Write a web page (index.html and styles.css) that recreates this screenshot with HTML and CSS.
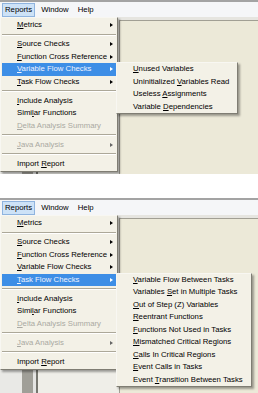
FILE: index.html
```html
<!DOCTYPE html>
<html lang="en">
<head>
  <meta charset="UTF-8" />
  <title>Reports menu</title>
  <link rel="stylesheet" href="styles.css">
</head>
<body>

  <!-- first shot: Variable Flow Checks open -->
  <div class="shot">
    <div class="topline"></div>
    <div class="menubar">
      <span class="open">Reports</span>
      <span>Window</span>
      <span>Help</span>
    </div>
    <div class="band"></div>
    <div class="workspace">
      <div class="left-pane">
        <div class="lp-a"></div><div class="lp-b"></div><div class="lp-c"></div><div class="lp-d"></div>
      </div>
      <div class="panel"></div>
    </div>

    <div class="menu main-menu">
      <div class="item sub"><span><u>M</u>etrics</span><i class="arrow"></i></div>
      <div class="sep"></div>
      <div class="item sub"><span><u>S</u>ource Checks</span><i class="arrow"></i></div>
      <div class="item sub"><span><u>F</u>unction Cross Reference</span><i class="arrow"></i></div>
      <div class="item sub hot"><span><u>V</u>ariable Flow Checks</span><i class="arrow"></i></div>
      <div class="item sub"><span><u>T</u>ask Flow Checks</span><i class="arrow"></i></div>
      <div class="sep"></div>
      <div class="item"><span><u>I</u>nclude Analysis</span></div>
      <div class="item"><span>Simi<u>l</u>ar Functions</span></div>
      <div class="item off"><span><u>D</u>elta Analysis Summary</span></div>
      <div class="sep"></div>
      <div class="item sub off"><span><u>J</u>ava Analysis</span><i class="arrow"></i></div>
      <div class="sep"></div>
      <div class="item"><span>Import <u>R</u>eport</span></div>
    </div>

    <div class="menu sub-menu sub-vars">
      <div class="item"><span><u>U</u>nused Variables</span></div>
      <div class="item"><span>Uninitialized <u>V</u>ariables Read</span></div>
      <div class="item"><span>Useless <u>A</u>ssignments</span></div>
      <div class="item"><span>Variable <u>D</u>ependencies</span></div>
    </div>
  </div>

  <!-- second shot: Task Flow Checks open -->
  <div class="shot">
    <div class="topline"></div>
    <div class="menubar">
      <span class="open">Reports</span>
      <span>Window</span>
      <span>Help</span>
    </div>
    <div class="band"></div>
    <div class="workspace">
      <div class="left-pane">
        <div class="lp-a"></div><div class="lp-b"></div><div class="lp-c"></div><div class="lp-d"></div>
      </div>
      <div class="panel"></div>
    </div>

    <div class="menu main-menu">
      <div class="item sub"><span><u>M</u>etrics</span><i class="arrow"></i></div>
      <div class="sep"></div>
      <div class="item sub"><span><u>S</u>ource Checks</span><i class="arrow"></i></div>
      <div class="item sub"><span><u>F</u>unction Cross Reference</span><i class="arrow"></i></div>
      <div class="item sub"><span><u>V</u>ariable Flow Checks</span><i class="arrow"></i></div>
      <div class="item sub hot"><span><u>T</u>ask Flow Checks</span><i class="arrow"></i></div>
      <div class="sep"></div>
      <div class="item"><span><u>I</u>nclude Analysis</span></div>
      <div class="item"><span>Simi<u>l</u>ar Functions</span></div>
      <div class="item off"><span><u>D</u>elta Analysis Summary</span></div>
      <div class="sep"></div>
      <div class="item sub off"><span><u>J</u>ava Analysis</span><i class="arrow"></i></div>
      <div class="sep"></div>
      <div class="item"><span>Import <u>R</u>eport</span></div>
    </div>

    <div class="menu sub-menu sub-tasks">
      <div class="item"><span><u>V</u>ariable Flow Between Tasks</span></div>
      <div class="item"><span>Variables <u>S</u>et in Multiple Tasks</span></div>
      <div class="item"><span><u>O</u>ut of Step (Z) Variables</span></div>
      <div class="item"><span><u>R</u>eentrant Functions</span></div>
      <div class="item"><span><u>F</u>unctions Not Used in Tasks</span></div>
      <div class="item"><span><u>M</u>ismatched Critical Regions</span></div>
      <div class="item"><span><u>C</u>alls In Critical Regions</span></div>
      <div class="item"><span><u>E</u>vent Calls in Tasks</span></div>
      <div class="item"><span>Event <u>T</u>ransition Between Tasks</span></div>
    </div>
  </div>

</body>
</html>
```

FILE: styles.css
```css
* {
  box-sizing: border-box;
  margin: 0;
  padding: 0;
}

body {
  width: 258px;
  background: #ffffff;
  font-family: "Liberation Sans", Arial, sans-serif;
  font-size: 7.75px;
  color: #000000;
}

.shot {
  position: relative;
  height: 174px;
  display: flex;
  flex-direction: column;
  overflow: hidden;
}

.shot + .shot {
  margin-top: 24px;
  height: 195px;
}

.topline {
  height: 2px;
  background: #a3a3a3;
}

.menubar {
  height: 15px;
  display: flex;
  align-items: center;
  gap: 3px;
  padding-left: 2px;
  background: #f5f6f8;
}

.menubar span {
  height: 14px;
  line-height: 12px;
  padding: 0 2px;
  border: 1px solid transparent;
}

.menubar .open {
  background: #cde2f7;
  border-color: #8fb4df;
}

.band {
  height: 3px;
  background: #e6e5e0;
}

.workspace {
  flex: 1;
  display: flex;
}

.left-pane {
  width: 119px;
  display: flex;
  background: #efeee8;
}

.lp-a { width: 22px; background: #e9e9e6; }
.lp-b { width: 11px; background: #a09f98; }
.lp-c { width: 3px; background: #e4e4e2; }
.lp-d { width: 2px; background: #76766f; }

.panel {
  flex: 1;
  background: #ece9d8;
  border-top: 1px solid #a19f94;
  border-left: 1px solid #a19f94;
}

/* dropdowns sit over the window */
.menu {
  position: absolute;
  padding: 1px;
  background: #f3f1e7;
  border: 1px solid;
  border-color: #f8f7f2 #7f7d73 #7f7d73 #f8f7f2;
  box-shadow: 2px 2px 2px rgba(0, 0, 0, 0.35);
}

.main-menu {
  left: 0;
  top: 17px;
  width: 118px;
}

.sub-menu {
  padding: 0 1px;
}

.sub-vars {
  left: 116px;
  top: 62px;
  width: 122px;
}

.sub-tasks {
  left: 116px;
  top: 74.5px;
  width: 136px;
}

.item {
  height: 12.5px;
  line-height: 12.5px;
  padding: 0 3px 0 15px;
  display: flex;
  align-items: center;
  justify-content: space-between;
  white-space: nowrap;
}

.item u {
  text-decoration: underline;
  text-underline-offset: 1px;
}

.item.hot {
  background: #3d8ee6;
  color: #eef2ff;
}

.item.off {
  color: #aaa9a2;
}

.arrow {
  width: 0;
  height: 0;
  border-left: 3px solid #000000;
  border-top: 2.5px solid transparent;
  border-bottom: 2.5px solid transparent;
}

.item.hot .arrow {
  border-left-color: #ffffff;
}

.item.off .arrow {
  border-left-color: #666666;
}

.sep {
  height: 6.5px;
  display: flex;
  align-items: center;
}

.sep::before {
  content: "";
  flex: 1;
  border-top: 1px solid #aca899;
  border-bottom: 1px solid #ffffff;
}
```
